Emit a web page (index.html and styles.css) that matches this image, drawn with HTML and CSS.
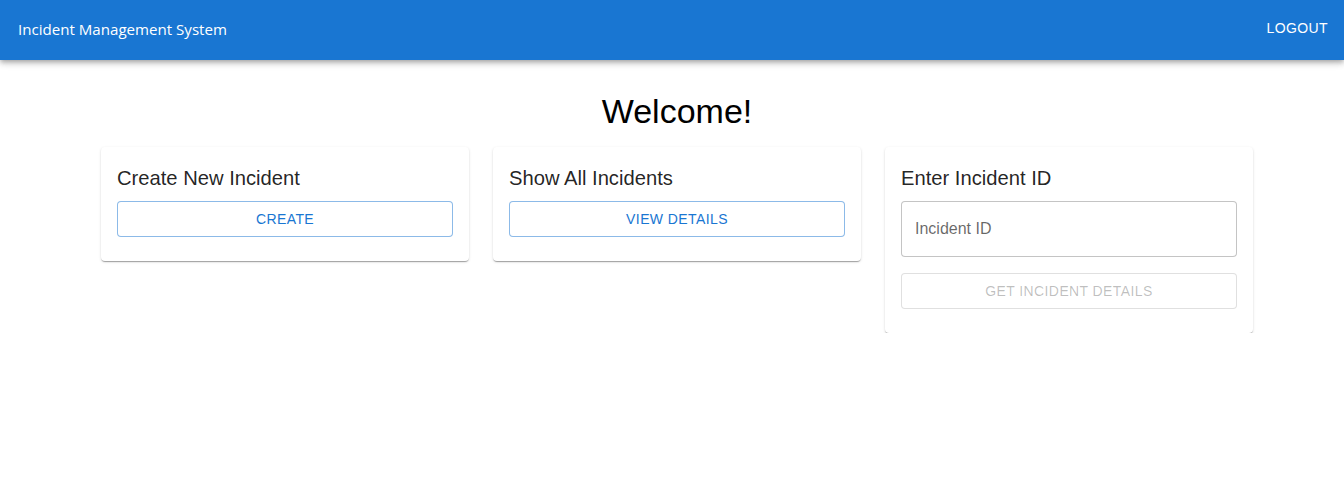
FILE: index.html
```html
<!DOCTYPE html>
<html lang="en">
<head>
<meta charset="utf-8">
<title>Incident Management System</title>
<link rel="stylesheet" href="styles.css">
</head>
<body>
<header class="appbar">
  <div class="brand">Incident Management System</div>
  <button class="logout" type="button">Logout</button>
</header>
<main class="page">
  <div class="content">
    <h1 class="welcome">Welcome!</h1>
    <div class="cards">
      <section class="card">
        <h2 class="card-title">Create New Incident</h2>
        <button class="btn btn-outlined" type="button">Create</button>
      </section>
      <section class="card">
        <h2 class="card-title">Show All Incidents</h2>
        <button class="btn btn-outlined" type="button">View Details</button>
      </section>
      <section class="card">
        <h2 class="card-title">Enter Incident ID</h2>
        <input class="field" type="text" placeholder="Incident ID">
        <button class="btn btn-disabled btn-spaced" type="button" disabled>Get Incident Details</button>
      </section>
    </div>
  </div>
</main>
</body>
</html>
```
FILE: styles.css
```css
* { box-sizing: border-box; }
html, body { margin: 0; padding: 0; background: #fff; }
body { font-family: "Liberation Sans", Arial, sans-serif; color: rgba(0,0,0,0.87); }

.appbar {
  height: 60px;
  background: #1976d2;
  color: #fff;
  display: flex;
  align-items: center;
  justify-content: space-between;
  padding: 0 16px 0 18px;
  box-shadow: 0px 2px 4px -1px rgba(0,0,0,0.2), 0px 4px 5px 0px rgba(0,0,0,0.14), 0px 1px 10px 0px rgba(0,0,0,0.12);
  position: relative;
  z-index: 1;
}
.brand {
  font-family: "Open Sans", "Noto Sans", sans-serif;
  font-size: 15.1px;
  line-height: 20px;
  margin-top: -2px;
}
.logout {
  background: none;
  border: 0;
  padding: 0;
  color: #fff;
  font-family: "Liberation Sans", Arial, sans-serif;
  font-size: 14px;
  font-weight: 500;
  letter-spacing: 0.02857em;
  text-transform: uppercase;
  line-height: 24px;
  margin-top: -4px;
}

.page { padding-left: 10px; }
.content { width: 1152px; margin: 0 auto; }
.welcome {
  margin: 30px 0 15px;
  text-align: center;
  font-size: 34px;
  font-weight: 400;
  line-height: 42px;
  color: #000;
}
.cards {
  display: grid;
  grid-template-columns: repeat(3, 368px);
  gap: 24px;
  align-items: start;
}
.card {
  background: #fff;
  border-radius: 4px;
  padding: 16px 16px 24px;
  box-shadow: 0px 2px 1px -1px rgba(0,0,0,0.2), 0px 1px 1px 0px rgba(0,0,0,0.14), 0px 1px 3px 0px rgba(0,0,0,0.12);
  display: flex;
  flex-direction: column;
}
.card-title {
  margin: -1px 0 7px;
  font-size: 20.2px;
  font-weight: 400;
  line-height: 32px;
  color: rgba(0,0,0,0.87);
}
.btn {
  height: 36px;
  width: 100%;
  background: #fff;
  border-radius: 4px;
  font-family: "Liberation Sans", Arial, sans-serif;
  font-size: 14px;
  font-weight: 500;
  letter-spacing: 0.02857em;
  text-transform: uppercase;
  padding: 5px 15px;
}
.btn-outlined {
  border: 1px solid rgba(25,118,210,0.5);
  color: #1976d2;
}
.btn-disabled {
  border: 1px solid rgba(0,0,0,0.12);
  color: rgba(0,0,0,0.26);
}
.btn-spaced { margin-top: 16px; }
.field {
  height: 56px;
  width: 100%;
  border: 1px solid rgba(0,0,0,0.23);
  border-radius: 4px;
  padding: 16.5px 13px;
  font-family: "Liberation Sans", Arial, sans-serif;
  font-size: 16px;
  color: rgba(0,0,0,0.87);
  outline: none;
}
.field::placeholder { color: rgba(0,0,0,0.6); opacity: 1; }
```
